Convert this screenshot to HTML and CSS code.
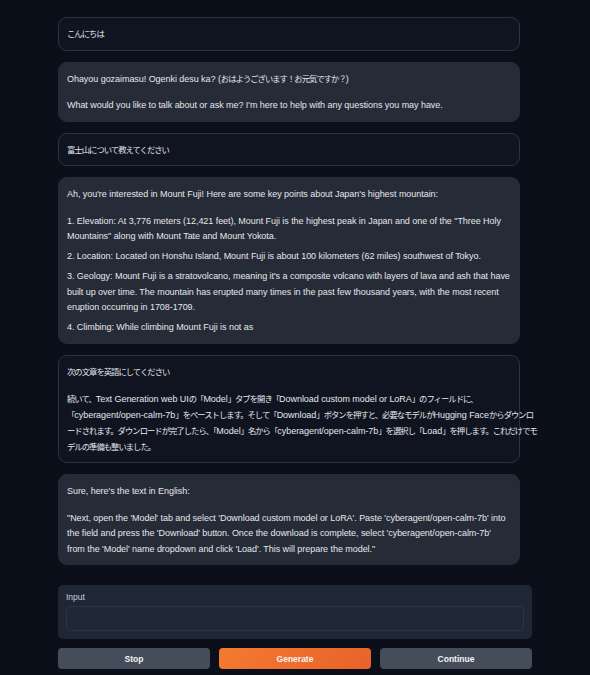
FILE: index.html
```html
<!DOCTYPE html>
<html lang="ja">
<head>
<meta charset="utf-8">
<link rel="stylesheet" href="styles.css">
</head>
<body>
<div class="page">
  <div class="chat">
    <div class="msg user"><p><span class="jp">こんにちは</span></p></div>
    <div class="msg bot">
      <p class="gap-big">Ohayou gozaimasu! Ogenki desu ka? (<span class="jp">おはようございます！お元気ですか？</span>)</p>
      <p>What would you like to talk about or ask me? I'm here to help with any questions you may have.</p>
    </div>
    <div class="msg user"><p><span class="jp">富士山について教えてください</span></p></div>
    <div class="msg bot">
      <p class="gap-big">Ah, you're interested in Mount Fuji! Here are some key points about Japan's highest mountain:</p>
      <p class="gap">1. Elevation: At 3,776 meters (12,421 feet), Mount Fuji is the highest peak in Japan and one of the "Three Holy Mountains" along with Mount Tate and Mount Yokota.</p>
      <p class="gap">2. Location: Located on Honshu Island, Mount Fuji is about 100 kilometers (62 miles) southwest of Tokyo.</p>
      <p class="gap">3. Geology: Mount Fuji is a stratovolcano, meaning it's a composite volcano with layers of lava and ash that have built up over time. The mountain has erupted many times in the past few thousand years, with the most recent eruption occurring in 1708-1709.</p>
      <p>4. Climbing: While climbing Mount Fuji is not as</p>
    </div>
    <div class="msg user">
      <p class="gap-big"><span class="jp">次の文章を英語にしてください</span></p>
      <p class="ja"><span class="jp">続いて、</span>Text Generation web UI<span class="jp">の「</span>Model<span class="jp">」タブを開き「</span>Download custom model or LoRA<span class="jp">」のフィールドに、</span><br><span class="jp">「</span>cyberagent/open-calm-7b<span class="jp">」をペーストします。そして「</span>Download<span class="jp">」ボタンを押すと、必要なモデルが</span>Hugging Face<span class="jp">からダウンロ</span><br><span class="jp">ードされます。ダウンロードが完了したら、「</span>Model<span class="jp">」名から「</span>cyberagent/open-calm-7b<span class="jp">」を選択し「</span>Load<span class="jp">」を押します。これだけでモ</span><br><span class="jp">デルの準備も整いました。</span></p>
    </div>
    <div class="msg bot">
      <p class="gap-big">Sure, here's the text in English:</p>
      <p>"Next, open the 'Model' tab and select 'Download custom model or LoRA'. Paste 'cyberagent/open-calm-7b' into the field and press the 'Download' button. Once the download is complete, select 'cyberagent/open-calm-7b' from the 'Model' name dropdown and click 'Load'. This will prepare the model."</p>
    </div>
  </div>
  <div class="input-panel">
    <label class="input-label" for="inp">Input</label>
    <textarea id="inp" class="input-box"></textarea>
  </div>
  <div class="buttons">
    <button class="btn">Stop</button>
    <button class="btn primary">Generate</button>
    <button class="btn">Continue</button>
  </div>
</div>
</body>
</html>
```
FILE: styles.css
```css
html, body {
  margin: 0;
  padding: 0;
  background: #0b0f19;
}
body {
  font-family: "Liberation Sans", "Noto Sans CJK JP", sans-serif;
  color: #e5e7eb;
}
.page {
  width: 474px;
  margin-left: 58px;
  padding-top: 17px;
}
.chat {
  width: 462px;
  display: flex;
  flex-direction: column;
  gap: 11px;
}
.msg {
  border-radius: 9px;
  padding: 9px 8px 7px;
  font-size: 9px;
  letter-spacing: -0.05px;
  line-height: 15.5px;
  border: 1px solid #283040;
}
.msg p {
  margin: 0;
}
.msg p.gap-big {
  margin-bottom: 11px;
}
.msg p.gap {
  margin-bottom: 4.5px;
}
.msg p.ja {
  line-height: 16px;
  white-space: nowrap;
}
.jp {
  font-family: "Noto Sans CJK JP", sans-serif;
  font-size: 8.3px;
  letter-spacing: -0.95px;
  line-height: 9px;
}
.user {
  background: #0f1420;
  border-color: #2b3340;
}
.bot {
  background: #252b37;
  border-color: #252b37;
}
.input-panel {
  margin-top: 20px;
  background: #1f2734;
  border-radius: 5px;
  padding: 7px 8px 7px 8px;
  display: flex;
  flex-direction: column;
  gap: 4px;
  height: 40px;
}
.input-label {
  font-size: 8.5px;
  color: #c9ced8;
  line-height: 10px;
}
.input-box {
  box-sizing: border-box;
  height: 25px;
  background: #1f2734;
  border: 1px solid #2c3544;
  border-radius: 4px;
  resize: none;
  outline: none;
}
.buttons {
  margin-top: 9px;
  display: flex;
  gap: 9px;
}
.btn {
  flex: 1;
  height: 21px;
  border: none;
  border-radius: 4px;
  background: #454d5b;
  color: #f3f4f6;
  font-family: "Liberation Sans", sans-serif;
  font-weight: bold;
  font-size: 8.5px;
  padding: 0;
}
.btn.primary {
  background: linear-gradient(135deg, #f47a30, #e8622a);
}
```
